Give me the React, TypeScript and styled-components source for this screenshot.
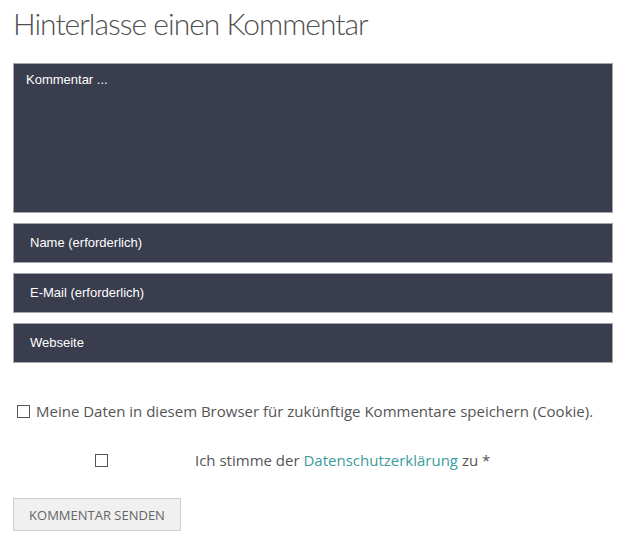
import React from 'react';
import styled, { createGlobalStyle } from 'styled-components';

const GlobalStyle = createGlobalStyle`
  body {
    margin: 0;
    background-color: #ffffff;
    font-family: 'Open Sans', 'Liberation Sans', sans-serif;
  }
`

const Wrapper = styled.div`
    width: 625px;
    padding: 0 13px;
    box-sizing: border-box;
`

const Title = styled.h3`
    margin: 0;
    padding-top: 3px;
    height: 53px;
    font-family: 'Lato', 'Open Sans', sans-serif;
    font-weight: 300;
    font-size: 30px;
    letter-spacing: -1px;
    line-height: 40px;
    color: #505050;
`

const Form = styled.form`
    display: flex;
    flex-direction: column;
`

const Fields = styled.div`
    display: flex;
    flex-direction: column;
    gap: 10px;
    margin-top: 7px;
`

const TextArea = styled.textarea`
    display: block;
    width: 600px;
    height: 150px;
    box-sizing: border-box;
    margin: 0;
    padding: 8px 12px;
    background-color: #393d4d;
    border: 1px solid #a4a6ac;
    color: #ffffff;
    font-family: 'Liberation Sans', Arial, sans-serif;
    font-size: 13px;
    resize: none;
    outline: none;

    &::placeholder {
        color: #ffffff;
        opacity: 1;
    }
`

const Input = styled.input`
    display: block;
    width: 600px;
    height: 40px;
    box-sizing: border-box;
    margin: 0;
    padding: 0 16px 1px;
    background-color: #393d4d;
    border: 1px solid #a4a6ac;
    color: #ffffff;
    font-family: 'Liberation Sans', Arial, sans-serif;
    font-size: 13px;
    outline: none;

    &::placeholder {
        color: #ffffff;
        opacity: 1;
    }
`

const CheckRow = styled.label`
    display: flex;
    align-items: center;
    gap: 6px;
    margin-top: 38px;
    padding-left: 4px;
    height: 20px;
    font-size: 15px;
    color: #555555;
`

const ConsentRow = styled.div`
    display: grid;
    grid-template-columns: 176px 1fr;
    column-gap: 6px;
    align-items: center;
    height: 20px;
    margin-top: 29px;
    font-size: 15px;
    color: #555555;
`

const BoxCell = styled.div`
    display: flex;
    justify-content: center;
`

const Box = styled.span`
    display: inline-block;
    width: 11px;
    height: 11px;
    border: 1px solid #555555;
    background-color: #ffffff;
    flex-shrink: 0;
`

const Link = styled.a`
    color: #3b9c9c;
    text-decoration: none;
`

const SubmitRow = styled.div`
    margin-top: 28px;
`

const Submit = styled.button`
    width: 168px;
    height: 33px;
    padding: 0;
    background-color: #f0f0f0;
    border: 1px solid #cfcfcf;
    color: #666666;
    font-family: 'Open Sans', sans-serif;
    font-size: 13px;
    text-transform: uppercase;
`

const App: React.FC = () => {
    return (
        <Wrapper>
            <GlobalStyle />
            <Title>Hinterlasse einen Kommentar</Title>
            <Form onSubmit={e => e.preventDefault()}>
                <Fields>
                    <TextArea placeholder="Kommentar ..." />
                    <Input placeholder="Name (erforderlich)" />
                    <Input placeholder="E-Mail (erforderlich)" />
                    <Input placeholder="Webseite" />
                </Fields>
                <CheckRow>
                    <Box />
                    Meine Daten in diesem Browser für zukünftige Kommentare speichern (Cookie).
                </CheckRow>
                <ConsentRow>
                    <BoxCell><Box /></BoxCell>
                    <span>Ich stimme der <Link href="#">Datenschutzerklärung</Link> zu *</span>
                </ConsentRow>
                <SubmitRow>
                    <Submit type="submit">Kommentar senden</Submit>
                </SubmitRow>
            </Form>
        </Wrapper>
    );
}

export default App;
